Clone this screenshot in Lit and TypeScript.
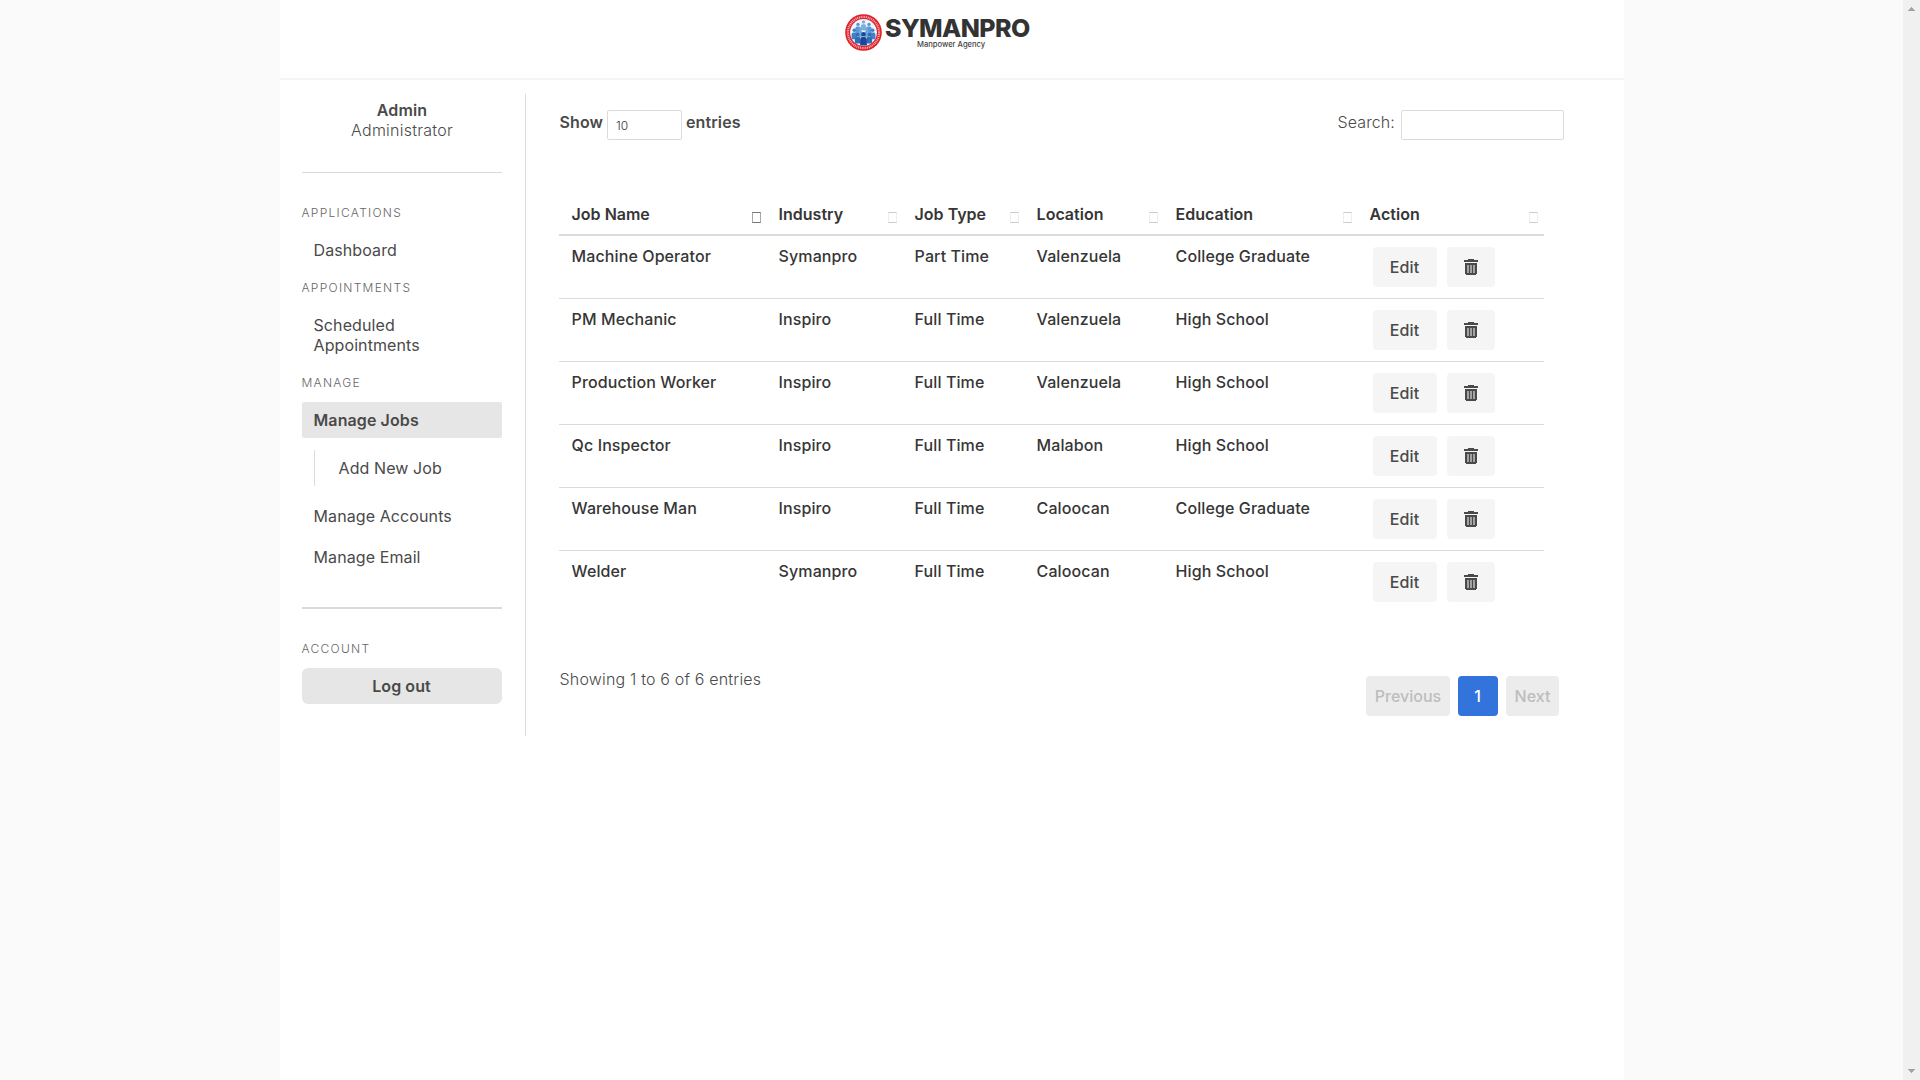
import { LitElement, html, css, svg } from "lit";
import { customElement } from "lit/decorators.js";

const columns = ["Job Name", "Industry", "Job Type", "Location", "Education", "Action"];

const jobs = [
  ["Machine Operator", "Symanpro", "Part Time", "Valenzuela", "College Graduate"],
  ["PM Mechanic", "Inspiro", "Full Time", "Valenzuela", "High School"],
  ["Production Worker", "Inspiro", "Full Time", "Valenzuela", "High School"],
  ["Qc Inspector", "Inspiro", "Full Time", "Malabon", "High School"],
  ["Warehouse Man", "Inspiro", "Full Time", "Caloocan", "College Graduate"],
  ["Welder", "Symanpro", "Full Time", "Caloocan", "High School"],
];

const trash = html`<svg class="trash" width="14" height="16" viewBox="0 0 14 16" shape-rendering="crispEdges">
  <path d="M4 0h6v1h4v2H0V1h4z" fill="#4a4a4a" />
  <path d="M1 4h12v11h-1v1H2v-1H1z" fill="#4a4a4a" />
  <path d="M3 6h2v8H3zM6 6h2v8H6zM9 6h2v8H9z" fill="#a2a2a2" />
</svg>`;

const worker = (x: number, y: number, s: number, fill: string) => svg`
  <g transform="translate(${x} ${y}) scale(${s})" fill=${fill}>
    <circle cx="0" cy="-2.6" r="1.7" />
    <path d="M-2.6 6V1.6Q-2.6-.4-1-.4H1Q2.6-.4 2.6 1.6V6z" />
  </g>`;

@customElement("app-root")
export class AppRoot extends LitElement {
  static styles = css`
    :host {
      display: flex;
      height: 1080px;
      background: #fafafa;
      font: 400 16px/20px Inter, "Liberation Sans", sans-serif;
      letter-spacing: 0.1px;
      color: #4a4a4a;
      overflow: hidden;
    }
    * { box-sizing: border-box; }
    .viewport { flex: 1; padding-left: 280px; }
    .page { width: 1344px; height: 1080px; background: #fff; }
    .scrollbar {
      width: 17px;
      background: #f0f0f0;
      display: flex;
      flex-direction: column;
      justify-content: space-between;
      align-items: center;
      padding: 7px 0;
    }
    .scrollbar svg { display: block; }
    header {
      height: 80px;
      border-bottom: 2px solid #f5f5f5;
      padding: 14px 0 0 564.5px;
      display: flex;
      gap: 3.5px;
    }
    .seal { width: 37px; height: 37px; display: block; }
    .brand { display: flex; flex-direction: column; padding-top: 2px; }
    .brand-name { font-size: 25px; line-height: 24px; font-weight: 800; color: #333; letter-spacing: -0.6px; }
    .brand-sub { font-size: 7.6px; line-height: 8px; margin-top: 1px; padding-left: 32px; font-weight: 500; color: #444; white-space: nowrap; letter-spacing: 0; }
    .body { display: flex; padding-top: 14px; }
    aside { width: 246px; height: 642px; padding: 6px 23px 0 22px; border-right: 1px solid #dbdbdb; }
    .user { text-align: center; height: 73px; border-bottom: 1px solid #dbdbdb; }
    .user b { display: block; font-weight: 600; }
    .user span { font-weight: 300; letter-spacing: 0.25px; }
    .label { font-size: 12px; line-height: 15px; letter-spacing: 1.28px; font-weight: 300; color: #666; text-transform: uppercase; margin-left: -0.5px; }
    .apps { margin-top: 32px; }
    .label + .item { margin-top: 12px; }
    .item { padding: 8px 11.5px; border-radius: 2px; }
    .item + .label { margin-top: 12px; }
    .tight + .label { margin-top: 11px; }
    .active { background: #e6e6e6; font-weight: 600; }
    .sub { margin: 12px 0 12px 12px; border-left: 1px solid #dbdbdb; padding-left: 12px; }
    .email { margin-top: 5px; }
    .rule { height: 2px; background: #dbdbdb; margin: 32px 0; }
    .logout { background: #e6e6e6; border-radius: 6px; height: 36px; line-height: 36px; text-align: center; font-weight: 600; margin-top: 12px; padding-right: 1px; }
    main { padding: 16px 0 0 33px; width: 1038px; }
    .tools { display: flex; justify-content: space-between; width: 1005px; height: 86px; align-items: flex-start; line-height: 24px; }
    .length { display: flex; font-weight: 600; padding-left: 0.5px; }
    .select { width: 75px; height: 30px; border: 1px solid #dbdbdb; border-radius: 2px; margin: 0 4px; padding: 2px 0 0 8px; font-size: 12px; font-weight: 300; line-height: 26px; color: #363636; }
    .search { display: flex; gap: 6px; font-weight: 300; }
    .box { width: 163px; height: 30px; border: 1px solid #dbdbdb; border-radius: 2px; }
    .row { display: grid; grid-template-columns: 207px 136px 122px 139px 194px 187px; width: 985px; height: 63px; border-bottom: 1px solid #dbdbdb; line-height: 24px; color: #363636; font-weight: 500; }
    .row:last-child { border-bottom: 0; }
    .cell { padding: 8px 0 8px 12.6px; white-space: nowrap; }
    .head { height: 40px; border-bottom: 2px solid #dbdbdb; font-weight: 600; letter-spacing: 0; }
    .head .cell { padding: 6px 5px 0 12.6px; display: flex; justify-content: space-between; }
    .head .cell:last-child { padding-right: 6px; }
    .sort { width: 9px; height: 11px; margin-top: 10px; border: 1px solid #eee; border-top-color: #ccc; border-bottom-color: #ccc; }
    .sorted { border-color: #a8a8a8; border-top-color: #777; border-bottom-color: #777; }
    .actions { display: flex; gap: 10px; padding: 11px 0 0 16px; color: #4a4a4a; }
    .btn { height: 40px; width: 64px; background: #f5f5f5; border-radius: 4px; line-height: 40px; text-align: center; padding-right: 1px; }
    .icon { width: 48px; display: flex; justify-content: center; align-items: center; padding: 0; }
    .trash { display: block; }
    .foot { display: flex; justify-content: space-between; width: 1000px; padding-top: 53px; line-height: 24px; }
    .info { font-weight: 300; letter-spacing: 0.18px; padding-left: 0.5px; }
    .pager { display: flex; gap: 8px; padding-top: 9px; letter-spacing: 0; }
    .pg { height: 40px; line-height: 40px; border-radius: 4px; background: #ececec; color: #bdbdbd; text-align: center; font-weight: 500; width: 40px; }
    .prev { width: 84px; }
    .next { width: 53px; }
    .current { background: #3273dc; color: #fff; padding-right: 1px; }
  `;

  render() {
    return html`
      <div class="viewport">
        <div class="page">
          <header>
            <svg class="seal" viewBox="0 0 37 37">
              <circle cx="18.5" cy="18.5" r="18.3" fill="#df2029" />
              <circle cx="18.5" cy="18.5" r="15.6" fill="none" stroke="#f2b4b6" stroke-width="2.2" stroke-dasharray="1 .8" />
              <circle cx="18.5" cy="18.5" r="13.4" fill="#eef4fb" />
              ${worker(18.5, 10.6, 1, "#7db0de")} ${worker(13, 13, 1, "#5a97d2")}
              ${worker(24, 13, 1, "#5a97d2")} ${worker(9.3, 19, 1.05, "#3f80c6")}
              ${worker(27.7, 19, 1.05, "#3f80c6")} ${worker(15, 17.5, 0.95, "#6ca5da")}
              ${worker(22, 17.5, 0.95, "#6ca5da")} ${worker(12.6, 23.2, 1.05, "#2f6dbb")}
              ${worker(24.4, 23.2, 1.05, "#2f6dbb")} ${worker(18.5, 23.6, 1.3, "#1b4797")}
            </svg>
            <div class="brand">
              <span class="brand-name">SYMANPRO</span>
              <span class="brand-sub">Manpower Agency</span>
            </div>
          </header>
          <div class="body">
            <aside>
              <div class="user"><b>Admin</b><span>Administrator</span></div>
              <div class="label apps">Applications</div>
              <div class="item">Dashboard</div>
              <div class="label tight">Appointments</div>
              <div class="item">Scheduled<br />Appointments</div>
              <div class="label">Manage</div>
              <div class="item active">Manage Jobs</div>
              <div class="sub"><div class="item">Add New Job</div></div>
              <div class="item">Manage Accounts</div>
              <div class="item email">Manage Email</div>
              <div class="rule"></div>
              <div class="label">Account</div>
              <div class="logout">Log out</div>
            </aside>
            <main>
              <div class="tools">
                <div class="length">Show<span class="select">10</span>entries</div>
                <div class="search">Search:<span class="box"></span></div>
              </div>
              <div class="table">
                <div class="row head">
                  ${columns.map((c, i) => html`<div class="cell">${c}<span class="sort ${i === 0 ? "sorted" : ""}"></span></div>`)}
                </div>
                ${jobs.map(
                  (job) => html`<div class="row">
                    ${job.map((v) => html`<div class="cell">${v}</div>`)}
                    <div class="actions"><div class="btn">Edit</div><div class="btn icon">${trash}</div></div>
                  </div>`
                )}
              </div>
              <div class="foot">
                <div class="info">Showing 1 to 6 of 6 entries</div>
                <div class="pager">
                  <div class="pg prev">Previous</div>
                  <div class="pg current">1</div>
                  <div class="pg next">Next</div>
                </div>
              </div>
            </main>
          </div>
        </div>
      </div>
      <div class="scrollbar">
        <svg width="7" height="4" shape-rendering="crispEdges"><path d="M3 0h1v1h1v1h1v1h1v1H0V3h1V2h1V1h1z" fill="#a3a3a3" /></svg>
        <svg width="7" height="4" shape-rendering="crispEdges"><path d="M0 0h7v1H6v1H5v1H4v1H3V3H2V2H1V1H0z" fill="#a3a3a3" /></svg>
      </div>
    `;
  }
}
